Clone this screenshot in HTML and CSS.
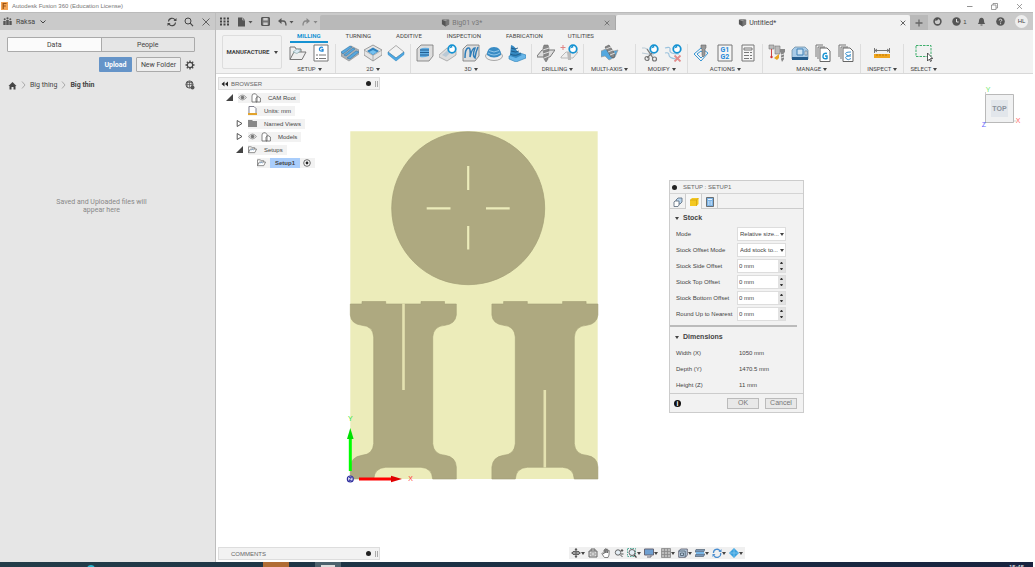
FILE: index.html
```
<!DOCTYPE html>
<html lang="en">
<head>
<meta charset="utf-8">
<title>Autodesk Fusion 360 (Education License)</title>
<link rel="stylesheet" href="styles.css">
</head>
<body>
<svg class="defs" aria-hidden="true">
  <defs>
    <symbol id="badge" viewBox="0 0 9 9"><circle cx="4.500" cy="4.500" r="3.400" fill="#fff" stroke="#1592d2" stroke-width="1.600"/><path d="M2 4l2-3 1 2z" fill="#1592d2"/></symbol>
    <symbol id="folder" viewBox="0 0 10 8"><path d="M.5 7.500V1h3l1 1h3v1.500M.5 7.500L2.500 3.500h7L7.500 7.500z" fill="#fff" stroke="#666" stroke-width=".8"/><path d="M3 5l2-1.500 1 1.500" stroke="#5b91c8" stroke-width=".7" fill="none"/></symbol>
    <symbol id="eye" viewBox="0 0 10 8"><path d="M.5 4Q5-1.500 9.500 4 5 9.500.5 4z" fill="#ddd" stroke="#888" stroke-width=".8"/><circle cx="5" cy="4" r="1.900" fill="#777"/></symbol>
    <symbol id="parts" viewBox="0 0 10 10"><path d="M1 3Q1 .8 3 .8h1.500L6 2.500V9H1zM5 9V5l2-1.500 2.400 1.500v4z" fill="#fff" stroke="#666" stroke-width=".8"/></symbol>
    <symbol id="cube" viewBox="0 0 10 10"><path d="M1 2L5 1l4 1v5L5 9.500 1 7z" fill="#555"/><path d="M1 2l4 1.500L9 2 5 1z" fill="#999"/><path d="M5 3.500L9 2v5L5 9.500z" fill="#777"/></symbol>
    <symbol id="open" viewBox="0 0 7 7"><path d="M0 7L7 0v7z" fill="#444"/></symbol>
    <symbol id="closed" viewBox="0 0 7 7"><path d="M1.200.5v6L6 3.500z" fill="#fff" stroke="#444" stroke-width=".9"/></symbol>
  </defs>
</svg>

<header class="titlebar">
  <svg class="i8" viewBox="0 0 8 8"><path d="M0 0h7v8H0z" fill="#f3a455"/><path d="M2.200 7V1.500h3.300M2.200 4h2.600" stroke="#9a5212" stroke-width="1.200" fill="none"/></svg>
  <h1>Autodesk Fusion 360 (Education License)</h1>
  <div class="window-buttons">
    <button aria-label="Minimize"><svg class="i7" viewBox="0 0 7 7"><path d="M1 3.500h5.500" stroke="#777" stroke-width=".8"/></svg></button>
    <button aria-label="Restore"><svg class="i7" viewBox="0 0 7 7"><path d="M.5 2h4.500v4.500H.5zM2 2V.5h4.500V5H5" fill="none" stroke="#777" stroke-width=".7"/></svg></button>
    <button aria-label="Close"><svg class="i7" viewBox="0 0 7 7"><path d="M1 1l5 5M6 1L1 6" stroke="#777" stroke-width=".7"/></svg></button>
  </div>
</header>

<div class="app">
  <aside class="data-panel">
    <div class="panel-head">
      <svg class="i9" viewBox="0 0 9 9"><g fill="#555"><circle cx="1.700" cy="2.200" r="1"/><circle cx="4.500" cy="1.300" r="1.100"/><circle cx="7.300" cy="2.200" r="1"/><path d="M.3 8V4h2.400v4zM3.200 8V3h2.600v5zM6.300 8V4h2.400v4z"/></g></svg>
      <button class="team">Raksa <svg class="i6" viewBox="0 0 6 6"><path d="M.5 1.500L3 4l2.500-2.500" fill="none" stroke="#444"/></svg></button>
      <button aria-label="Refresh"><svg class="i10" viewBox="0 0 10 10"><path d="M1.500 4.500A3.500 3.500 0 0 1 8 3M8.500 5.500A3.500 3.500 0 0 1 2 7" fill="none" stroke="#444" stroke-width="1.100"/><path d="M9.500 1v3h-3zM.5 9V6h3z" fill="#444"/></svg></button>
      <button aria-label="Search"><svg class="i10" viewBox="0 0 10 10"><circle cx="4" cy="4" r="3" fill="none" stroke="#444"/><path d="M6.200 6.200L9 9.200" stroke="#444" stroke-width="1.200"/></svg></button>
      <button aria-label="Close data panel"><svg class="i10" viewBox="0 0 10 10"><path d="M1.500 1.500l7 7M8.500 1.500l-7 7" stroke="#555" stroke-width=".9"/></svg></button>
    </div>
    <div class="segmented"><button class="chosen">Data</button><button>People</button></div>
    <div class="upload-row">
      <button class="primary">Upload</button><button class="secondary">New Folder</button>
      <button class="gear" aria-label="Settings"><svg class="i10" viewBox="0 0 10 10"><circle cx="5" cy="5" r="2.700" fill="none" stroke="#444" stroke-width="1.200"/><path d="M5 .5v1.500M5 8v1.500M.5 5H2M8 5h1.500M1.800 1.800l1 1M7.200 7.200l1 1M8.200 1.800l-1 1M2.800 7.200l-1 1" stroke="#444" stroke-width="1.300"/></svg></button>
    </div>
    <nav class="crumbs">
      <a href="#" aria-label="Home"><svg class="i9" viewBox="0 0 9 9"><path d="M.5 5L4.500 1l4 4h-1v3.500h-2V6h-2v2.500h-2V5z" fill="#444"/></svg></a>
      <svg class="chev" viewBox="0 0 5 8"><path d="M1 .5L4 4 1 7.500" fill="none" stroke="#aaa"/></svg>
      <a href="#">Big thing</a>
      <svg class="chev" viewBox="0 0 5 8"><path d="M1 .5L4 4 1 7.500" fill="none" stroke="#aaa"/></svg>
      <strong>Big thin</strong>
      <svg class="i10 web" viewBox="0 0 10 10"><circle cx="4.500" cy="4.500" r="3.600" fill="#ddd" stroke="#555"/><path d="M1 4.500h7M4.500 1v7M2 2.500h5M2.500 1.500q-1 3 0 6M6.500 1.500q1 3 0 6" stroke="#555" stroke-width=".7" fill="none"/><circle cx="7.500" cy="7.500" r="2" fill="#555"/></svg>
    </nav>
    <p class="empty">Saved and Uploaded files will appear here</p>
  </aside>

  <main class="workspace">
    <div class="appbar">
      <div class="quick">
        <button aria-label="Show data panel"><svg class="i9" viewBox="0 0 9 9"><path d="M1 .5v8M4.500.5v8M8 .5v8" stroke="#444" stroke-width="2" stroke-dasharray="2 1"/></svg></button>
        <button aria-label="File"><svg class="w16" viewBox="0 0 16 10"><path d="M1 .5h4.500L8 3v6.500H1z" fill="#555"/><path d="M5.500.5V3H8" fill="none" stroke="#ccc" stroke-width=".6"/><path d="M11.500 4h4l-2 2.500z" fill="#555"/></svg></button>
        <button aria-label="Save"><svg class="i9" viewBox="0 0 9 9"><path d="M.7.700h7.600v7.600H.7z" fill="#777" stroke="#444"/><path d="M2.300 1h4.400v2.500H2.300zM2.300 5.500h4.400V8H2.300z" fill="#ccc"/></svg></button>
        <button aria-label="Undo"><svg class="w16" viewBox="0 0 16 10"><path d="M2 4h3q3 0 3 4.500" fill="none" stroke="#555" stroke-width="1.300"/><path d="M0 4l3.500-3v6zM11.500 4h4l-2 2.500z" fill="#555"/></svg></button>
        <button aria-label="Redo"><svg class="w16" viewBox="0 0 16 10"><path d="M6 4H4Q1 4 1 8.500" fill="none" stroke="#888" stroke-width="1.300"/><path d="M8 4L4.500 1v6zM11.500 4h4l-2 2.500z" fill="#888"/></svg></button>
      </div>
      <div class="doc-tab"><span><svg class="i9"><use href="#cube"/></svg>Big01 v3*</span><button aria-label="Close Big01"><svg class="i6" viewBox="0 0 6 6"><path d="M.7.7l4.600 4.600M5.300.7L.7 5.300" stroke="#777"/></svg></button></div>
      <div class="doc-tab current"><span><svg class="i9"><use href="#cube"/></svg>Untitled*</span><button aria-label="Close Untitled"><svg class="i6" viewBox="0 0 6 6"><path d="M.7.7l4.600 4.600M5.300.7L.7 5.300" stroke="#666"/></svg></button></div>
      <button class="new-tab" aria-label="New design"><svg class="i8" viewBox="0 0 8 8"><path d="M4 .5v7M.5 4h7" stroke="#666" stroke-width="1.300"/></svg></button>
      <div class="status">
        <svg class="i9" viewBox="0 0 9 9"><circle cx="4.500" cy="4.500" r="3.400" fill="none" stroke="#555" stroke-width="1.600"/><path d="M2 4l2-3 1 2z" fill="#444"/></svg>
        <span class="jobs"><svg class="i9" viewBox="0 0 9 9"><circle cx="4.500" cy="4.500" r="4.200" fill="#555"/><path d="M4.500 2v3h2.200" stroke="#ddd" fill="none"/></svg>1</span>
        <svg class="i9" viewBox="0 0 9 9"><path d="M.8 7Q2 6 2 4q0-3 2.500-3.200Q7 1 7 4q0 2 1.200 3zM3.500 7.500h2v1h-2z" fill="#555"/></svg>
        <svg class="i9" viewBox="0 0 9 9"><circle cx="4.500" cy="4.500" r="4.300" fill="#555"/><path d="M3.200 3.500Q3.300 2.200 4.600 2.200 5.900 2.300 5.800 3.400 5.700 4 4.600 4.700v.6M4.600 6.200v1" stroke="#ddd" fill="none"/></svg>
        <span class="avatar">HL</span>
      </div>
    </div>

    <div class="ribbon">
      <button class="workspace-picker">MANUFACTURE <i class="caret"></i></button>
      <div class="ribbon-body">
        <nav class="ribbon-tabs"><a href="#" class="on">MILLING</a><a href="#">TURNING</a><a href="#">ADDITIVE</a><a href="#">INSPECTION</a><a href="#">FABRICATION</a><a href="#">UTILITIES</a></nav>
        <div class="groups">
          <section class="group">
            <div class="tools">
              <svg viewBox="0 0 18 18"><path d="M1 15.500V3h5l1 2h5v3M1 15.500L5 8h12l-4 7.500z" fill="#eee" stroke="#777"/><path d="M4 8l4-3 4 1.500-4 3z" fill="#dce9f3" stroke="#8aa" stroke-width=".7"/></svg>
              <svg viewBox="0 0 18 18"><path d="M2 1h14v16H2z" fill="#fff" stroke="#777"/><path d="M11 3.500Q8 2.500 7.500 5T11 7V5.500H9.500" fill="none" stroke="#1e88d8" stroke-width="1.300"/><path d="M4 11h2M7 11h7M4 14.500h2M7 14.500h7" stroke="#777"/></svg>
            </div><button>SETUP <i class="caret"></i></button>
          </section>
          <section class="group">
            <div class="tools">
              <svg viewBox="0 0 18 18"><path d="M0 9L10 2l8 4v4L8 17l-8-5z" fill="#a9b0b6" stroke="#888" stroke-width=".6"/><path d="M0 8l9-6 2 1-9 7zM3 11l9-7 2 1-9 7zM6 14l9-7 3 1-9 7z" fill="#55a8e0" stroke="#3a7ba8" stroke-width=".6"/></svg>
              <svg viewBox="0 0 18 18"><path d="M0 6l9-5 9 5v5l-9 6-9-6z" fill="#e4e4e4" stroke="#888" stroke-width=".8"/><path d="M0 6l9 5.500L18 6M9 11.500V17" stroke="#999" stroke-width=".7" fill="none"/><path d="M3 7l6-3.500L15 7l-6 4z" fill="#2f82bd"/><path d="M5 8l4-2 4 2-4 2.600z" fill="#75c0ef"/></svg>
              <svg viewBox="0 0 18 18"><path d="M1 8l8-6.500L17 8l-8 6z" fill="#f2f2f2" stroke="#999" stroke-width=".8"/><path d="M1 8v2.500l8 6.500 8-6.500V8l-8 6z" fill="#4da8e4" stroke="#2980b9" stroke-width=".5"/></svg>
            </div><button>2D <i class="caret"></i></button>
          </section>
          <section class="group">
            <div class="tools">
              <svg viewBox="0 0 18 18"><path d="M1 5l4-4h12v11l-4 5H1z" fill="#ddd" stroke="#777" stroke-width=".8"/><path d="M4 5q3-2 9-1v8q-5 2-9 1z" fill="#62aee3"/><path d="M4 6h9M4 8.500h9M4 11h9" stroke="#225f91" stroke-width="1.100"/></svg>
              <svg viewBox="0 0 18 18"><path d="M0 11l8-7 9 3v4l-9 6-8-4z" fill="#ddd" stroke="#999" stroke-width=".7"/><path d="M3 11l6-5 4 1-6 6z" fill="#bac9d5"/><use href="#badge" x="8" y="0" width="10" height="10"/></svg>
              <svg viewBox="0 0 18 18"><path d="M1 5l4-4h12v11l-4 5H1z" fill="#dedede" stroke="#777" stroke-width=".8"/><path d="M3 14Q3 5 6 4t2 9q2-9 5-9-3 8 0 10 1-7 3-11" fill="none" stroke="#2f7db8" stroke-width="1.500"/></svg>
              <svg viewBox="0 0 18 18"><ellipse cx="9" cy="12" rx="8.500" ry="4.500" fill="#eee" stroke="#888" stroke-width=".7"/><path d="M2 11Q2 3 9 3t7 8q-7 5-14 0z" fill="#398cc5"/><path d="M3 9q6 4 12 0M4 6.500q5 3 10 0" fill="none" stroke="#a8d5f1" stroke-width=".8"/></svg>
              <svg viewBox="0 0 18 18"><path d="M1 12l11-3 6 2v3l-10 4-7-3z" fill="#69b6e8" stroke="#277cb4" stroke-width=".6"/><path d="M2 12L3 1q4 1 6 6l5 4-6 3z" fill="#3589c2"/><path d="M3 4q4 2 7 0M3 7q5 2 8 0M2 10q6 3 11-1" fill="none" stroke="#174f7b" stroke-width=".8"/></svg>
            </div><button>3D <i class="caret"></i></button>
          </section>
          <section class="group">
            <div class="tools">
              <svg viewBox="0 0 18 18"><path d="M0 12L5 6h13l-5 7H0z" fill="#ddd" stroke="#777"/><path d="M7 1h4l1 3-1 11-2 3-2-3-1-11z" fill="#888" stroke="#666" stroke-width=".5"/><path d="M6 6l6-2M6 10l6-2M7 14l5-2" stroke="#ddd"/></svg>
              <svg viewBox="0 0 18 18"><path d="M1 13l5-5h12l-5 6H1z" fill="#eee" stroke="#aaa" stroke-width=".8"/><path d="M7 8h4v8H8z" fill="#bbb"/><path d="M3 1v5M.5 3.500h5" stroke="#e08484"/><use href="#badge" x="8" y="0" width="10" height="10"/></svg>
            </div><button>DRILLING <i class="caret"></i></button>
          </section>
          <section class="group single">
            <div class="tools"><svg viewBox="0 0 18 18"><path d="M0 7l5-2 4 3 8-2-3 7-6 3-4-4-4 1z" fill="#54a8df" stroke="#999" stroke-width=".7"/><path d="M4 3l4-2 6 9-1 4-3-1z" fill="#888" stroke="#555" stroke-width=".6"/><path d="M5 5l5-2M7 8l5-2M9 11l5-2" stroke="#ddd"/></svg></div><button>MULTI-AXIS <i class="caret"></i></button>
          </section>
          <section class="group">
            <div class="tools">
              <svg viewBox="0 0 18 18"><path d="M1 4q6-1 9 6M1 9l12 2" stroke="#b9c9d4" fill="none"/><path d="M6 5l6 9M13 7l-7 7" stroke="#777" stroke-width="1.200"/><circle cx="6" cy="14.500" r="2" fill="none" stroke="#777" stroke-width="1.200"/><circle cx="13.500" cy="15" r="2" fill="none" stroke="#777" stroke-width="1.200"/><use href="#badge" x="8" y="0" width="10" height="10"/></svg>
              <svg viewBox="0 0 18 18"><path d="M1 4q6-2 5 2t9 4M1 9q4-1 4 2t7 4" stroke="#9bc2dd" stroke-width="1.200" fill="none"/><path d="M10.500 11.500l6 6M16.500 11.500l-6 6" stroke="#e38c8c" stroke-width="1.800"/><use href="#badge" x="8" y="0" width="10" height="10"/></svg>
            </div><button>MODIFY <i class="caret"></i></button>
          </section>
          <section class="group">
            <div class="tools">
              <svg viewBox="0 0 18 18"><path d="M1 10l7-6 7 5-7 8z" fill="none" stroke="#3796d5"/><path d="M4 10l4-3 4 3-4 4z" fill="none" stroke="#3796d5"/><path d="M8 1h5v3l-1 1v6l-2 2-1-2V5L8 4z" fill="#999" stroke="#666" stroke-width=".6"/></svg>
              <svg class="g-code" viewBox="0 0 18 18"><path d="M2 1h14v16H2z" fill="#f5f5f5" stroke="#777"/><text x="9" y="8">G1</text><text x="9" y="15">G2</text></svg>
              <svg viewBox="0 0 18 18"><path d="M3 1h12v16H3z" fill="#f5f5f5" stroke="#777"/><path d="M5 4h8v2H5zM5 8.500h5M11 8.500h2M5 11.500h5M11 11.500h2M5 14.500h5M11 14.500h2" fill="none" stroke="#777"/></svg>
            </div><button>ACTIONS <i class="caret"></i></button>
          </section>
          <section class="group">
            <div class="tools">
              <svg viewBox="0 0 18 18"><path d="M1 1h5v4H1zM7 2h5v8H7z" fill="#bbb" stroke="#777" stroke-width=".6"/><path d="M3.500 5v8" stroke="#c44"/><circle cx="3.500" cy="13" r="1.200" fill="#c33"/><path d="M6 14l5-4v4l-2 2z" fill="#e8a520"/><path d="M12 5h5v3l-1 1v6l-2 3-1-3V9l-1-1z" fill="#888"/><path d="M13 11l3-1M13 14l3-1" stroke="#ddd"/></svg>
              <svg viewBox="0 0 18 18"><path d="M1 6l3-3h10l3 3v9H1z" fill="#a8cbe8" stroke="#66879d" stroke-width=".7"/><path d="M1 13h16v3H1z" fill="#245c8c"/><path d="M6 5h6v6H6z" fill="#cfe3f2" stroke="#3e80b5"/><path d="M14 7h2v4h-2z" fill="#dbe9f2" stroke="#567" stroke-width=".5"/></svg>
              <svg viewBox="0 0 18 18"><path d="M2 13V1h7M4 15V3h7" fill="none" stroke="#777"/><path d="M6 4h7l3 3v10.500H6z" fill="#fff" stroke="#666"/><path d="M13 9.500Q9.500 8.500 9 12t4 2.500V12h-2" fill="none" stroke="#1592d2" stroke-width="1.400"/></svg>
              <svg viewBox="0 0 18 18"><path d="M2 13V1h7M4 15V3h7" fill="none" stroke="#777"/><path d="M6 4h7l3 3v10.500H6z" fill="#fff" stroke="#666"/><path d="M14 8q-7 0-5 2.500t5 0M14 12q-7 0-5 2.500t5 0" fill="none" stroke="#3992d0"/></svg>
            </div><button>MANAGE <i class="caret"></i></button>
          </section>
          <section class="group narrow">
            <div class="tools"><svg viewBox="0 0 18 18"><path d="M1.500 4v5M16.500 4v5M2 6.500h14M4 5L2 6.500 4 8M14 5l2 1.500L14 8" fill="none" stroke="#666" stroke-width=".9"/><path d="M1 10h16v4H1z" fill="#f0a51e"/><path d="M4 10v2M7 10v2M10 10v2M13 10v2" stroke="#a66400" stroke-width=".7"/></svg></div><button>INSPECT <i class="caret"></i></button>
          </section>
          <section class="group narrow last">
            <div class="tools"><svg viewBox="0 0 18 18"><path d="M1 1.500h15v11H1z" fill="none" stroke="#3fae6c" stroke-dasharray="2.500 1"/><path d="M12.500 9v8l2-2 1 2.500 1-.5-1-2.500h2.300z" fill="#fff" stroke="#333" stroke-width=".8"/></svg></div><button>SELECT <i class="caret"></i></button>
          </section>
        </div>
      </div>
    </div>

    <div class="canvas">
      <svg class="model" viewBox="340 125 280 365" role="img" aria-label="Stock with three parts">
        <path d="M350.300 131.300h247.400v347.700H350.300z" fill="#ececba"/>
        <circle cx="468.200" cy="208.200" r="76.500" fill="#aea980" stroke="#a29d76" stroke-width=".7"/>
        <path d="M468.200 166v24M468.200 226v23.500M426.700 208.300h23.800M486 208.300h23.700" stroke="#ececba" stroke-width="2.200"/>
        <g id="leg" fill="#aea980" stroke="#a29d76" stroke-width=".6"><path d="M350.300 304H362v-2.500h23.700V304H421v-2.500h23.500V304H456.300v11q-1 9-11.300 10.300Q433.500 326 432.700 337V443.500Q433.500 454.500 445 455.300 456 457 456.300 467V479H432.700Q432 468 421 467.300H385.700Q374.500 468 373.700 479H350.300V467Q351 457 362 455.300 373 454.500 373.700 443.500V337Q373 326 362 325.300 351 324 350.300 315z"/></g>
        <use href="#leg" x="141.600"/>
        <path d="M403.500 303.500V390M544.800 390v77.500" stroke="#e4e2b0" stroke-width="2.600"/>
        <path d="M350.300 471V437" stroke="#0f0" stroke-width="3"/><path d="M347 439l3.300-11 3.300 11z" fill="#00e000"/>
        <path d="M359 479h34" stroke="#f00" stroke-width="3"/><path d="M391 475.700l11 3.300-11 3.300z" fill="#e00000"/>
        <circle cx="350.300" cy="479" r="3" fill="#d4d4f0" stroke="#2a2a9c" stroke-width="1.100"/><path d="M349 477.500h2.600l-2.600 3h2.600" fill="none" stroke="#2a2a9c" stroke-width=".8"/>
        <text x="350.300" y="421" fill="#2ee62e">Y</text><text x="410.500" y="481.200" fill="#f33">X</text>
      </svg>

      <section class="browser">
        <div class="float-bar"><svg class="rewind" viewBox="0 0 7 6"><path d="M3.500.5v5L.5 3zM7 .5v5L4 3z" fill="#222"/></svg><h2>BROWSER</h2><i class="dot"></i><i class="grip"></i></div>
        <ul class="tree">
          <li><svg class="i7"><use href="#open"/></svg><span class="node"><svg class="i9"><use href="#eye"/></svg><svg class="i10"><use href="#parts"/></svg><span>CAM Root</span></span></li>
          <li class="l2"><span class="node"><svg class="i9" viewBox="0 0 9 9"><path d="M1 .5h5l2 2V8H1z" fill="#fff" stroke="#667" stroke-width=".8"/><path d="M0 7h9v2H0z" fill="#e2a32c"/></svg><span>Units: mm</span></span></li>
          <li class="l1"><svg class="i7"><use href="#closed"/></svg><span class="node"><svg class="i9" viewBox="0 0 9 9"><path d="M0 1h4l1 1h4v6H0z" fill="#888"/></svg><span>Named Views</span></span></li>
          <li class="l1"><svg class="i7"><use href="#closed"/></svg><span class="node"><svg class="i9"><use href="#eye"/></svg><svg class="i10"><use href="#parts"/></svg><span>Models</span></span></li>
          <li class="l1"><svg class="i7"><use href="#open"/></svg><span class="node"><svg class="i9"><use href="#folder"/></svg><span>Setups</span></span></li>
          <li class="l3"><span class="node"><svg class="i9"><use href="#folder"/></svg><span class="selected">Setup1</span><svg class="i8 radio" viewBox="0 0 8 8"><circle cx="4" cy="4" r="3.300" fill="#fff" stroke="#444" stroke-width=".8"/><circle cx="4" cy="4" r="1.400" fill="#222"/></svg></span></li>
        </ul>
      </section>

      <div class="float-bar comments"><h2>COMMENTS</h2><i class="dot"></i><i class="grip"></i></div>

      <svg class="viewcube" viewBox="0 0 42 44" role="img" aria-label="View cube: top">
        <path d="M6.500 9.500h28v28h-28z" fill="#f0f1f2" stroke="#b9b9b9"/><path d="M12 15h17v17H12z" fill="#e2e6eb"/>
        <path d="M6.500 9.500V7M6.500 37.500l-2 1M34.500 36l3 0" stroke="#bbb" stroke-width=".7"/>
        <text x="20.500" y="26" class="face">TOP</text><text x="9" y="7" fill="#6fe86f">Y</text><text x="39" y="38" fill="#f66">X</text><text x="5" y="42" fill="#66f">Z</text>
      </svg>

      <form class="dialog">
        <div class="dialog-head"><i class="dot"></i><h2>SETUP : SETUP1</h2></div>
        <div class="dialog-tabs">
          <button type="button" aria-label="Setup"><svg class="i10" viewBox="0 0 10 10"><path d="M3 3l2-2h4v4L7 7H3z" fill="#b9d6ef" stroke="#567" stroke-width=".8"/><path d="M1 5l1-1h4v4L5 9.500H1z" fill="#fff" stroke="#567" stroke-width=".8"/></svg></button>
          <button type="button" class="on" aria-label="Stock"><svg class="i10" viewBox="0 0 10 10"><path d="M1 3l2-2h6.500v6l-2 2H1z" fill="#f4c821"/><path d="M1 3h6.500v6M7.500 3l2-2" fill="none" stroke="#c99a0d" stroke-width=".6"/></svg></button>
          <button type="button" aria-label="Post Process"><svg class="i10" viewBox="0 0 10 10"><path d="M1.500.5h7v9h-7z" fill="#7db4e6" stroke="#555" stroke-width=".8"/><path d="M3 2.500h4M3 5h1.500M5.500 5H7M3 7h1.500M5.500 7H7" stroke="#e9f4ff"/></svg></button>
        </div>
        <div class="dialog-body">
          <h3><i class="caret"></i>Stock</h3>
          <div class="row"><label for="mode">Mode</label><span class="pick"><select id="mode"><option>Relative size...</option></select><i class="caret"></i></span></div>
          <div class="row"><label for="offset">Stock Offset Mode</label><span class="pick"><select id="offset"><option>Add stock to...</option></select><i class="caret"></i></span></div>
          <div class="row"><label for="side">Stock Side Offset</label><span class="spin"><input id="side" value="0 mm"><span><button type="button" aria-label="Increase"><i class="up"></i></button><button type="button" aria-label="Decrease"><i class="down"></i></button></span></span></div>
          <div class="row"><label for="top">Stock Top Offset</label><span class="spin"><input id="top" value="0 mm"><span><button type="button" aria-label="Increase"><i class="up"></i></button><button type="button" aria-label="Decrease"><i class="down"></i></button></span></span></div>
          <div class="row"><label for="bottom">Stock Bottom Offset</label><span class="spin"><input id="bottom" value="0 mm"><span><button type="button" aria-label="Increase"><i class="up"></i></button><button type="button" aria-label="Decrease"><i class="down"></i></button></span></span></div>
          <div class="row"><label for="round">Round Up to Nearest</label><span class="spin"><input id="round" value="0 mm"><span><button type="button" aria-label="Increase"><i class="up"></i></button><button type="button" aria-label="Decrease"><i class="down"></i></button></span></span></div>
          <hr>
          <h3><i class="caret"></i>Dimensions</h3>
          <div class="row"><span>Width (X)</span><output>1050 mm</output></div>
          <div class="row"><span>Depth (Y)</span><output>1470.5 mm</output></div>
          <div class="row"><span>Height (Z)</span><output>11 mm</output></div>
        </div>
        <div class="dialog-foot"><span class="info">i</span><button type="button">OK</button><button type="button">Cancel</button></div>
      </form>

      <div class="navbar">
        <button aria-label="Orbit"><svg class="i10" viewBox="0 0 10 10"><path d="M5 .5v9M.5 5h9" stroke="#555"/><ellipse cx="5" cy="5" rx="4" ry="1.800" fill="none" stroke="#555"/><path d="M3.500 2L5 0l1.500 2zM3.500 8L5 10l1.500-2z" fill="#555"/></svg><i class="caret"></i></button>
        <button aria-label="Look at"><svg class="i10" viewBox="0 0 10 10"><path d="M1 3h8v6H1zM3 3V1h4v2" fill="#ddd" stroke="#666"/><path d="M3 5h4v2H3z" fill="#fff" stroke="#777" stroke-width=".7"/></svg></button>
        <button aria-label="Pan"><svg class="i10" viewBox="0 0 10 10"><path d="M3 9L.8 5.500l1-.5L3 6V2l1-.3V5 1l1-.3V5l.5-4 1 .2V5l.8-2.800.9.3L8 7 7 9.500H3.500z" fill="#fff" stroke="#555" stroke-width=".7"/></svg></button>
        <button aria-label="Zoom"><svg class="i10" viewBox="0 0 10 10"><circle cx="4" cy="4.500" r="2.700" fill="#e4eef5" stroke="#666"/><path d="M6 6.500l2.500 2.500M8 1v3M6.700 2.500h2.600M7 6h2.500" stroke="#555"/></svg></button>
        <button aria-label="Fit"><svg class="i10" viewBox="0 0 10 10"><path d="M.5.500h8v8h-8z" fill="none" stroke="#5a9" stroke-dasharray="1.500 1"/><circle cx="5" cy="4.500" r="3" fill="#e4eef5" stroke="#666"/><path d="M7 7l2.500 2.500" stroke="#444" stroke-width="1.300"/></svg><i class="caret"></i></button>
        <button aria-label="Display settings"><svg class="i10" viewBox="0 0 10 10"><path d="M.5 1h9v6h-9z" fill="#6f9fd0" stroke="#667"/><path d="M3 9h4V7.500" stroke="#667" fill="none"/></svg><i class="caret"></i></button>
        <button aria-label="Grid"><svg class="i10" viewBox="0 0 10 10"><path d="M.5.500h9v9h-9zM3.500.500v9M6.500.500v9M.5 3.500h9M.5 6.500h9" fill="#bbb" stroke="#888" stroke-width=".8"/></svg><i class="caret"></i></button>
        <button aria-label="Viewports"><svg class="i10" viewBox="0 0 10 10"><path d="M.7 3l2-2h6.600v6L7.500 9.300H.7z" fill="#b9cde0" stroke="#556" stroke-width=".8"/><path d="M.7 3h6.500v6M2.500 5h3v2.500h-3z" fill="none" stroke="#456" stroke-width=".8"/></svg><i class="caret"></i></button>
        <button aria-label="Section"><svg class="i10" viewBox="0 0 10 10"><path d="M1 1.500h9L8.500 4H0zM1 6h9L8.500 8.500H0z" fill="#7997b8" stroke="#456" stroke-width=".6"/><path d="M1 4h8v2H1z" fill="#79b7e8"/></svg><i class="caret"></i></button>
        <button aria-label="Regenerate"><svg class="i10" viewBox="0 0 10 10"><path d="M1.500 5A3.500 3.500 0 0 1 8 3M8.500 5A3.500 3.500 0 0 1 2 7.500" fill="none" stroke="#4a8ed0" stroke-width="1.300"/><path d="M9.500 1v3h-3zM.5 9V6h3z" fill="#4a8ed0"/></svg><i class="caret"></i></button>
        <button aria-label="Stock display"><svg class="i10" viewBox="0 0 10 10"><path d="M0 5l5-5 5 5-5 5z" fill="#39a0de"/><path d="M0 5h10M5 0v10" stroke="#8ccdf2" stroke-width=".7"/></svg><i class="caret"></i></button>
      </div>
    </div>
  </main>
</div>

<footer class="taskbar"><i class="task edge"></i><i class="task orange"></i><i class="task mail"></i><i class="task running"></i><time>15:45</time></footer>
</body>
</html>
```
FILE: styles.css
```
* { box-sizing: border-box; }
body {
  margin: 0;
  padding-right: 2px;
  height: 100vh;
  display: flex;
  flex-direction: column;
  overflow: hidden;
  background: #fff;
  color: #444;
  font: 6px/8px "Liberation Sans", Arial, sans-serif;
}
h1, h2, h3, p, ul { margin: 0; padding: 0; font-size: inherit; font-weight: normal; }
ul { list-style: none; }
button { margin: 0; padding: 0; border: 0; background: none; font: inherit; color: inherit; display: flex; align-items: center; justify-content: center; }
a { color: inherit; text-decoration: none; }
svg { display: block; flex: none; }
.defs { width: 0; height: 0; position: absolute; }
.i6 { width: 6px; height: 6px; }
.i7 { width: 7px; height: 7px; }
.i8 { width: 8px; height: 8px; }
.i9 { width: 9px; height: 9px; }
.i10 { width: 10px; height: 10px; }
.w16 { width: 16px; height: 10px; }
.caret { display: inline-block; flex: none; border: 2px solid transparent; border-top: 3px solid #444; border-bottom: 0; }

.titlebar { flex: none; height: 12px; display: flex; align-items: center; gap: 3px; padding-left: 1px; }
.titlebar h1 { flex: 1; color: #777; }
.window-buttons { display: flex; gap: 18px; padding-right: 10px; }

.app { flex: 1; min-height: 0; display: flex; border-top: 1px solid #bbb; }
.data-panel { flex: none; width: 216px; background: #e6e6e6; border-right: 1px solid #bdbdbd; font-family: Roboto, "Liberation Sans", sans-serif; font-size: 7px; }
.panel-head { height: 17px; background: #cacaca; display: flex; align-items: center; gap: 7px; padding: 0 4px 0 3px; }
.panel-head svg + .team { margin-left: -3px; margin-right: auto; }
.team { gap: 5px; }
.segmented { display: flex; margin: 7px 20px 0 7px; border: 1px solid #aaa; border-radius: 1px; }
.segmented button { flex: 1; height: 13px; }
.segmented .chosen { background: #fbfbfb; border-right: 1px solid #aaa; }
.upload-row { display: flex; justify-content: flex-end; align-items: center; gap: 4px; margin: 5px 20px 0 0; }
.primary, .secondary { height: 15px; border-radius: 1px; }
.primary { width: 33px; background: #6594c8; color: #fff; font-weight: bold; }
.secondary { width: 45px; border: 1px solid #aaa; background: #eee; white-space: nowrap; }
.crumbs { display: flex; align-items: center; gap: 4px; margin: 7px 20px 0 8px; height: 12px; }
.chev { width: 5px; height: 8px; }
.web { margin-left: auto; }
.empty { margin: 107px 12px 0 0; padding: 0 54px; color: #888; text-align: center; }

.workspace { flex: 1; min-width: 0; display: flex; flex-direction: column; }
.appbar { height: 17px; background: #cacaca; display: flex; flex: none; }
.quick { width: 104px; flex: none; display: flex; align-items: center; gap: 7px; padding-left: 4px; }
.quick button:nth-child(n+2) { margin-left: 1px; }
.doc-tab { flex: 1; margin-top: 2px; display: flex; align-items: center; background: #b9b9b9; border-right: 1px solid #a8a8a8; border-radius: 2px 2px 0 0; color: #777; padding-right: 4px; font: 7px/8px Roboto, "Liberation Sans", sans-serif; }
.doc-tab span { flex: 1; display: flex; justify-content: center; gap: 2px; align-items: center; }
.doc-tab button { width: 7px; }
.doc-tab.current { background: #f2f2f2; color: #444; border: 0; }
.new-tab { width: 18px; background: #b9b9b9; margin-top: 2px; }
.status { width: 105px; display: flex; align-items: center; justify-content: space-between; padding: 0 5px; flex: none; }
.jobs { display: flex; gap: 2px; align-items: center; }
.avatar { width: 13px; height: 13px; border-radius: 50%; background: #eee; text-align: center; line-height: 13px; }

.ribbon { flex: none; display: flex; height: 44px; background: #f2f2f2; border-bottom: 1px solid #d8d8d8; padding-left: 6px; gap: 2px; font-family: Roboto, "Liberation Sans", sans-serif; }
.workspace-picker { flex: none; width: 60px; height: 34px; margin-top: 5px; border: 1px solid #ddd; border-radius: 2px; font-weight: bold; gap: 4px; }
.ribbon-body { display: flex; flex-direction: column; }
.ribbon-tabs { display: flex; gap: 11px; padding-left: 6px; height: 13px; }
.ribbon-tabs a { padding: 2px 7px 0; }
.ribbon-tabs .on { color: #1592d2; font-weight: bold; border-bottom: 2px solid #1592d2; }
.groups { display: flex; margin-top: 1px; }
.group { padding: 0 5px; border-right: 1px solid #ddd; height: 29px; display: flex; flex-direction: column; align-items: center; justify-content: space-between; }
.group.single { padding: 0 7px; }
.group.narrow { padding: 0 6px; }
.group.last { border: 0; }
.tools { display: flex; gap: 5px; }
.tools svg { width: 18px; height: 18px; }
.group button { white-space: nowrap; gap: 2px; line-height: 8px; }
.g-code text { font: bold 7px Roboto, sans-serif; fill: #1e88d8; text-anchor: middle; }

.canvas { flex: 1; position: relative; background: #fff; overflow: hidden; }
.model { position: absolute; left: 124px; top: 51px; width: 280px; height: 365px; }
.model text, .viewcube text { font: 7px "Liberation Sans", sans-serif; text-anchor: middle; }
.float-bar { display: flex; align-items: center; width: 162px; height: 13px; background: #f2f2f2; border: 1px solid #ddd; padding: 0 1px 0 2px; }
.float-bar h2 { flex: 1; color: #666; }
.rewind { width: 7px; height: 6px; margin-right: 3px; }
.dot { width: 5px; height: 5px; border-radius: 50%; background: #222; flex: none; }
.grip { width: 3px; height: 6px; border: solid #aaa; border-width: 0 1px; margin-left: 4px; }
.browser { position: absolute; left: 2px; top: 3px; }
.tree { padding: 1px 0 0 8px; }
.tree li { height: 13px; display: flex; align-items: center; gap: 5px; }
.tree .l1 { padding-left: 10px; }
.tree .l2 { padding-left: 22px; }
.tree .l3 { padding-left: 31px; }
.node { display: flex; align-items: center; gap: 4px; height: 10px; background: #f2f2f2; padding-right: 4px; }
.node > span { padding: 1px 0 1px 3px; }
.node > .selected { background: #a9cdfb; padding: 1px 5px; font-weight: bold; }
.radio { margin-left: -1px; }
.comments { position: absolute; left: 2px; bottom: 2px; padding-left: 12px; }
.viewcube { position: absolute; right: 12px; top: 11px; width: 42px; height: 44px; }
.viewcube .face { font-weight: bold; fill: #8a929b; }

.dialog { position: absolute; right: 229px; top: 106px; width: 135px; background: #f2f2f2; border: 1px solid #ccc; }
.dialog-head { height: 13px; display: flex; align-items: center; gap: 6px; padding-left: 2px; border-bottom: 1px solid #d4d4d4; color: #666; }
.dialog-tabs { display: flex; height: 15px; border-bottom: 1px solid #ccc; }
.dialog-tabs button { width: 16px; border-right: 1px solid #ccc; height: 15px; }
.dialog-tabs .on { background: #f7f7f7; }
.dialog-body { padding: 1px 6px 0 0; }
.dialog h3 { height: 16px; padding-left: 5px; display: flex; align-items: center; gap: 4px; font-weight: bold; font-size: 7px; }
.row { height: 16px; padding-left: 6px; display: grid; grid-template-columns: 61px 49px; align-items: center; white-space: nowrap; }
.row output { padding-left: 2px; }
.pick, .spin { display: flex; align-items: center; height: 14px; background: #fff; border: 1px solid #ddd; }
.pick select { appearance: none; flex: 1; min-width: 0; padding: 0 0 0 2px; border: 0; background: none; font: inherit; color: inherit; }
.pick .caret { margin-right: 1px; }
.spin input { flex: 1; width: 30px; min-width: 0; padding: 0 1px; border: 0; background: none; font: inherit; color: inherit; }
.spin > span { width: 7px; background: #e2e2e2; }
.spin button { width: 7px; height: 6px; }
.up, .down { border: 1px solid transparent; width: 3px; }
.up { border-top: 0; border-bottom: 2px solid #333; }
.down { border-bottom: 0; border-top: 2px solid #333; }
.dialog hr { margin: 3px 0 2px; border: 0; height: 2px; background: #bbb; }
.dialog-foot { display: flex; align-items: center; gap: 6px; height: 19px; padding: 0 6px 0 4px; border-top: 1px solid #ccc; font-size: 7px; }
.dialog-foot button { width: 32px; height: 11px; border: 1px solid #bbb; background: #e8e8e8; color: #777; }
.info { width: 7px; height: 7px; line-height: 7px; border-radius: 50%; background: #111; color: #fff; text-align: center; font-weight: bold; margin-right: auto; }

.navbar { position: absolute; left: calc(43% + 2px); bottom: 3px; display: flex; align-items: center; gap: 3px; height: 12px; padding: 0 2px; background: #f0f0f0; }

.taskbar { flex: none; height: 5px; display: flex; overflow: hidden; background: linear-gradient(90deg, #233d49, #1b3044 50%, #18233f); color: #fff; }
.task { flex: none; height: 5px; }
.edge { width: 8px; margin: 3px 0 0 87px; background: #29b6cf; border-radius: 4px 4px 0 0; }
.orange { width: 26px; margin-left: 168px; background: #b06c34; }
.mail { width: 26px; }
.running { width: 26px; background: #ddd; border: solid #4d626d; border-width: 3px 6px 0; }
.taskbar time { margin-left: auto; padding: 1px 9px 0 0; }
```
